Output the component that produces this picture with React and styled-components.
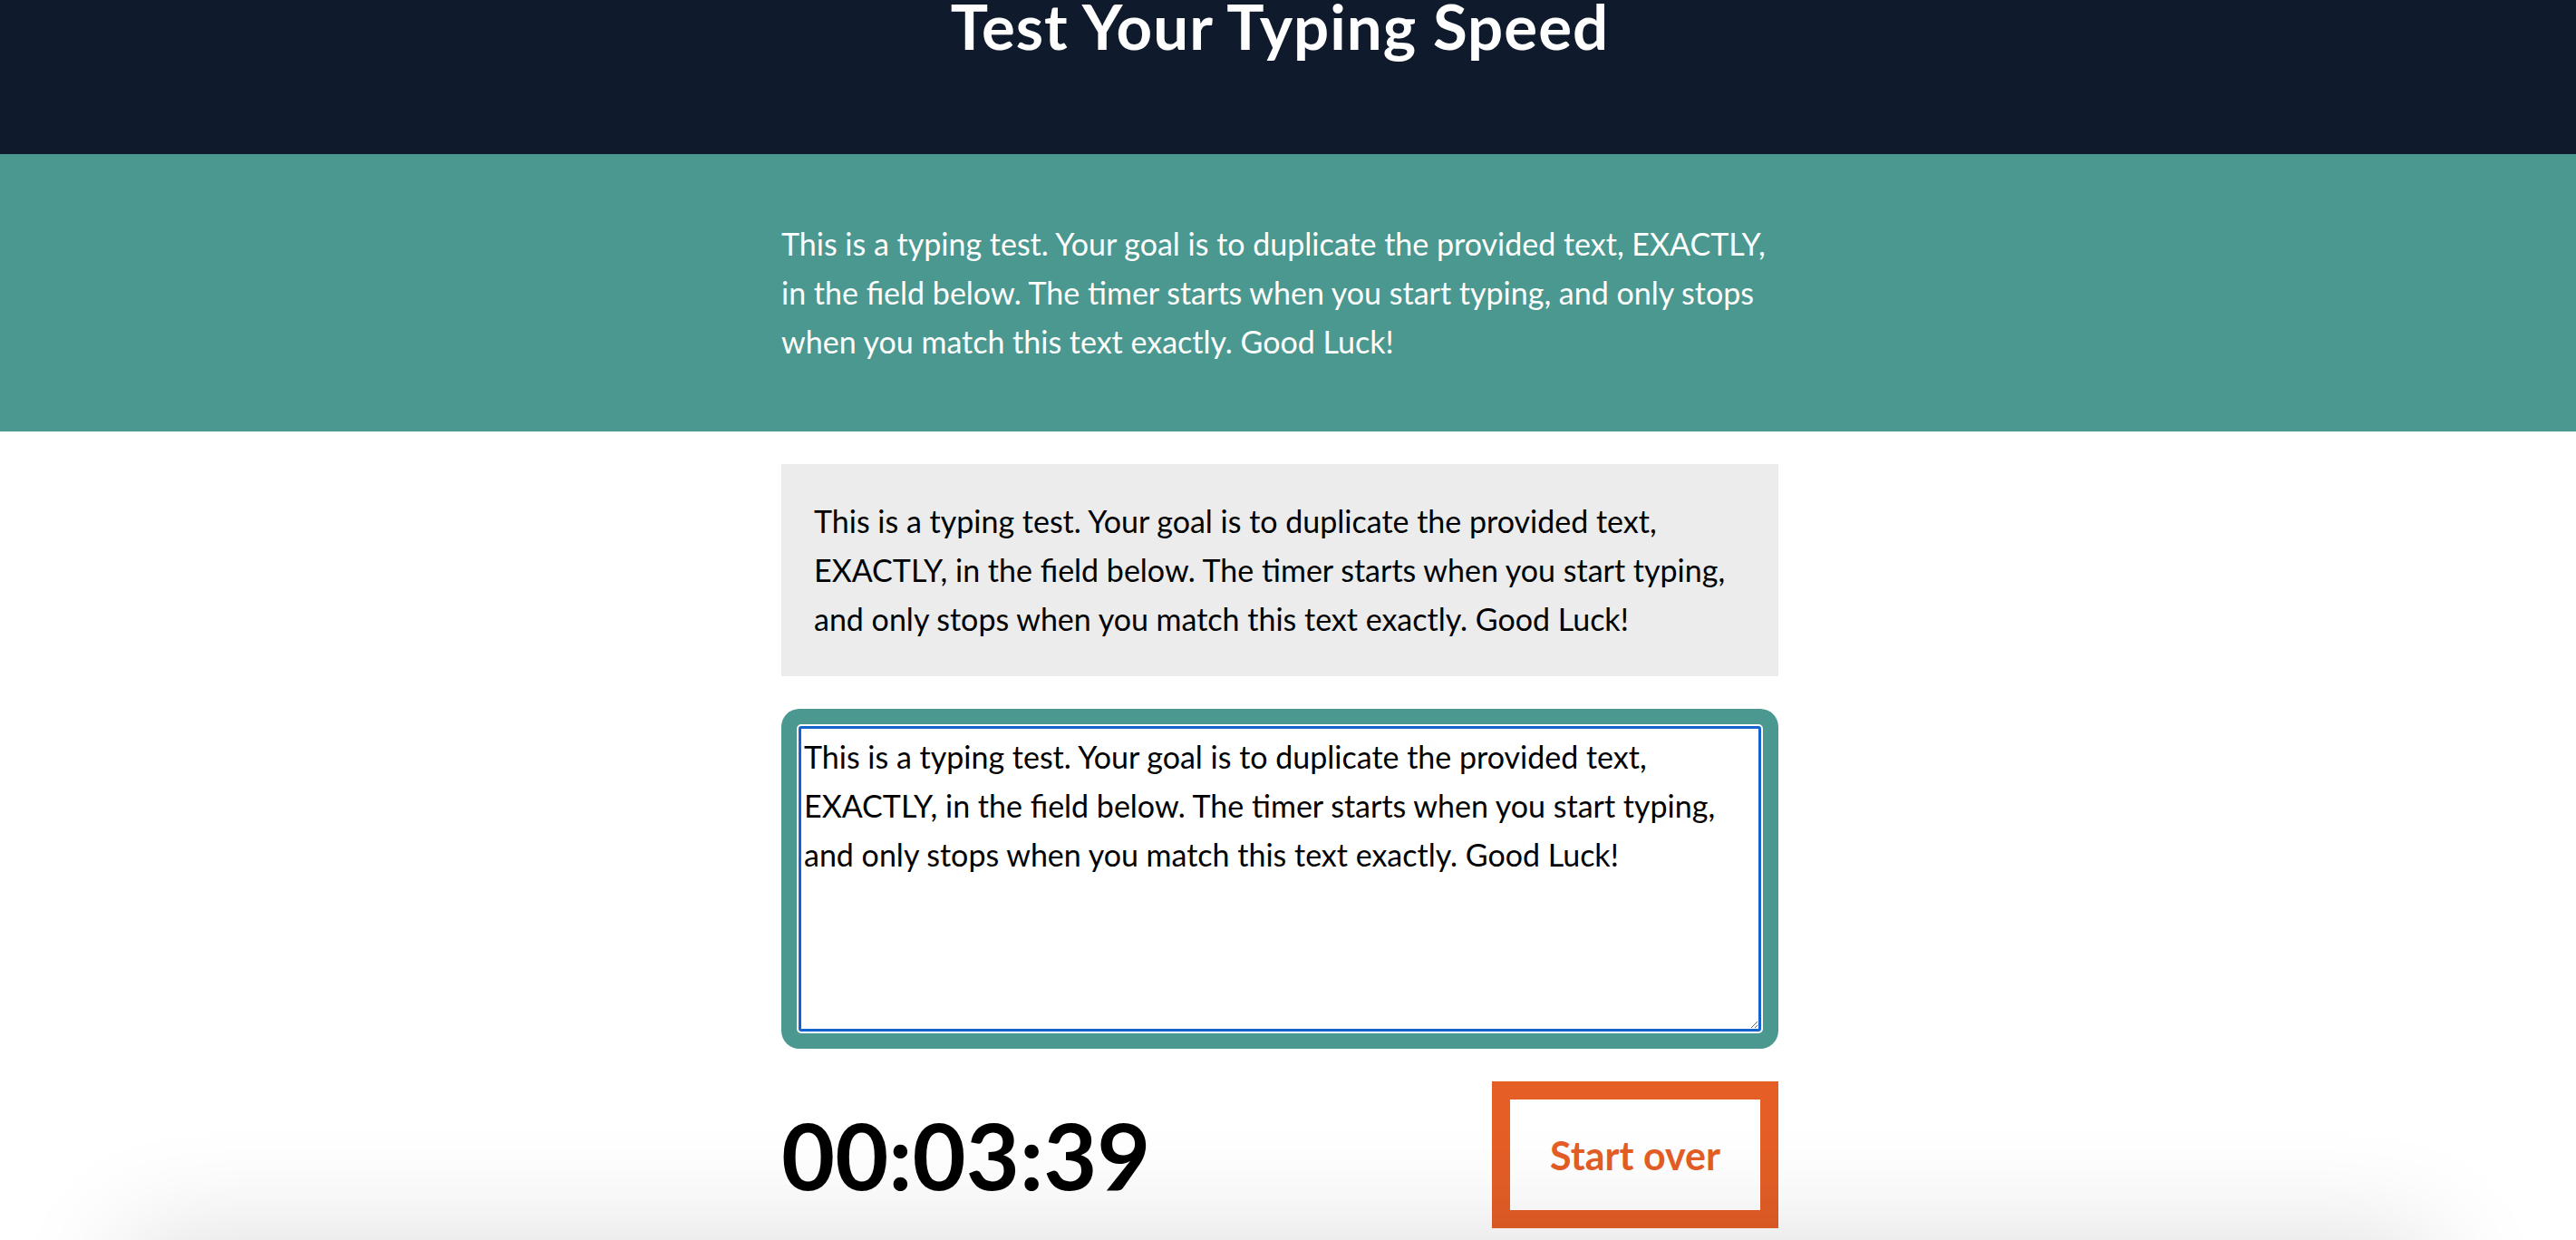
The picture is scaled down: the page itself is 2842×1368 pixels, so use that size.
import React, { useEffect, useRef } from 'react';
import styled, { createGlobalStyle } from 'styled-components';

const PASSAGE =
  'This is a typing test. Your goal is to duplicate the provided text, EXACTLY, in the field below. The timer starts when you start typing, and only stops when you match this text exactly. Good Luck!';

const GlobalStyle = createGlobalStyle`
  * { box-sizing: border-box; }
  html, body {
    margin: 0;
    padding: 0;
    background: #fff;
    overflow: hidden;
  }
  body {
    font-family: Lato, "Open Sans", sans-serif;
    font-size: 34px;
    line-height: 54px;
    color: #000;
  }
`;

const Header = styled.header`
  height: 170px;
  background-color: #0f1b2d;
  display: flex;
  justify-content: center;
  padding-right: 18px;
`;

const Title = styled.h1`
  margin: 0;
  font-family: Lato, sans-serif;
  font-weight: 700;
  font-size: 69px;
  line-height: 57px;
  letter-spacing: 1px;
  color: #fff;
`;

const Intro = styled.section`
  background-color: #4a9890;
  padding: 72px 18px 72px 0;
`;

const Container = styled.div`
  width: 1100px;
  margin: 0 auto;
`;

const IntroText = styled.p`
  margin: 0;
  color: #fff;
`;

const Main = styled.main`
  padding: 36px 18px 0 0;
`;

const Passage = styled.div`
  background-color: #ececec;
  padding: 36px;
`;

const EditorWrap = styled.div`
  margin-top: 36px;
  background-color: #4a9890;
  border-radius: 20px;
  padding: 19px;
`;

const Editor = styled.textarea`
  display: block;
  width: 100%;
  height: 337px;
  margin: 0;
  padding: 4px 3px;
  border: 3px solid #1463cf;
  border-radius: 3px;
  box-shadow: 0 0 0 2px #fff;
  outline: none;
  background: #fff;
  color: #000;
  font: inherit;
  line-height: 54px;
`;

const Footer = styled.div`
  margin-top: 36px;
  display: flex;
  align-items: center;
  justify-content: space-between;
`;

const Timer = styled.div`
  font-family: Lato, sans-serif;
  font-weight: 700;
  font-size: 102px;
  line-height: 1;
`;

const StartOver = styled.button`
  width: 316px;
  height: 162px;
  border: 20px solid #e45e26;
  background: #fff;
  color: #e45e26;
  font-family: Lato, sans-serif;
  font-weight: 700;
  font-size: 43px;
  cursor: pointer;
`;

const Shade = styled.div`
  position: fixed;
  left: 140px;
  right: 158px;
  top: 100%;
  height: 400px;
  box-shadow: 0 0 120px rgba(0, 0, 0, 0.14);
  pointer-events: none;
`;

export default function App() {
  const editor = useRef(null);

  useEffect(() => {
    const el = editor.current;
    if (el) {
      el.focus();
      el.setSelectionRange(el.value.length, el.value.length);
    }
  }, []);

  return (
    <>
      <GlobalStyle />
      <Header>
        <Title>Test Your Typing Speed</Title>
      </Header>
      <Intro>
        <Container>
          <IntroText>{PASSAGE}</IntroText>
        </Container>
      </Intro>
      <Main>
        <Container>
          <Passage>{PASSAGE}</Passage>
          <EditorWrap>
            <Editor ref={editor} defaultValue={PASSAGE} spellCheck={false} />
          </EditorWrap>
          <Footer>
            <Timer>00:03:39</Timer>
            <StartOver>Start over</StartOver>
          </Footer>
        </Container>
      </Main>
      <Shade />
    </>
  );
}
